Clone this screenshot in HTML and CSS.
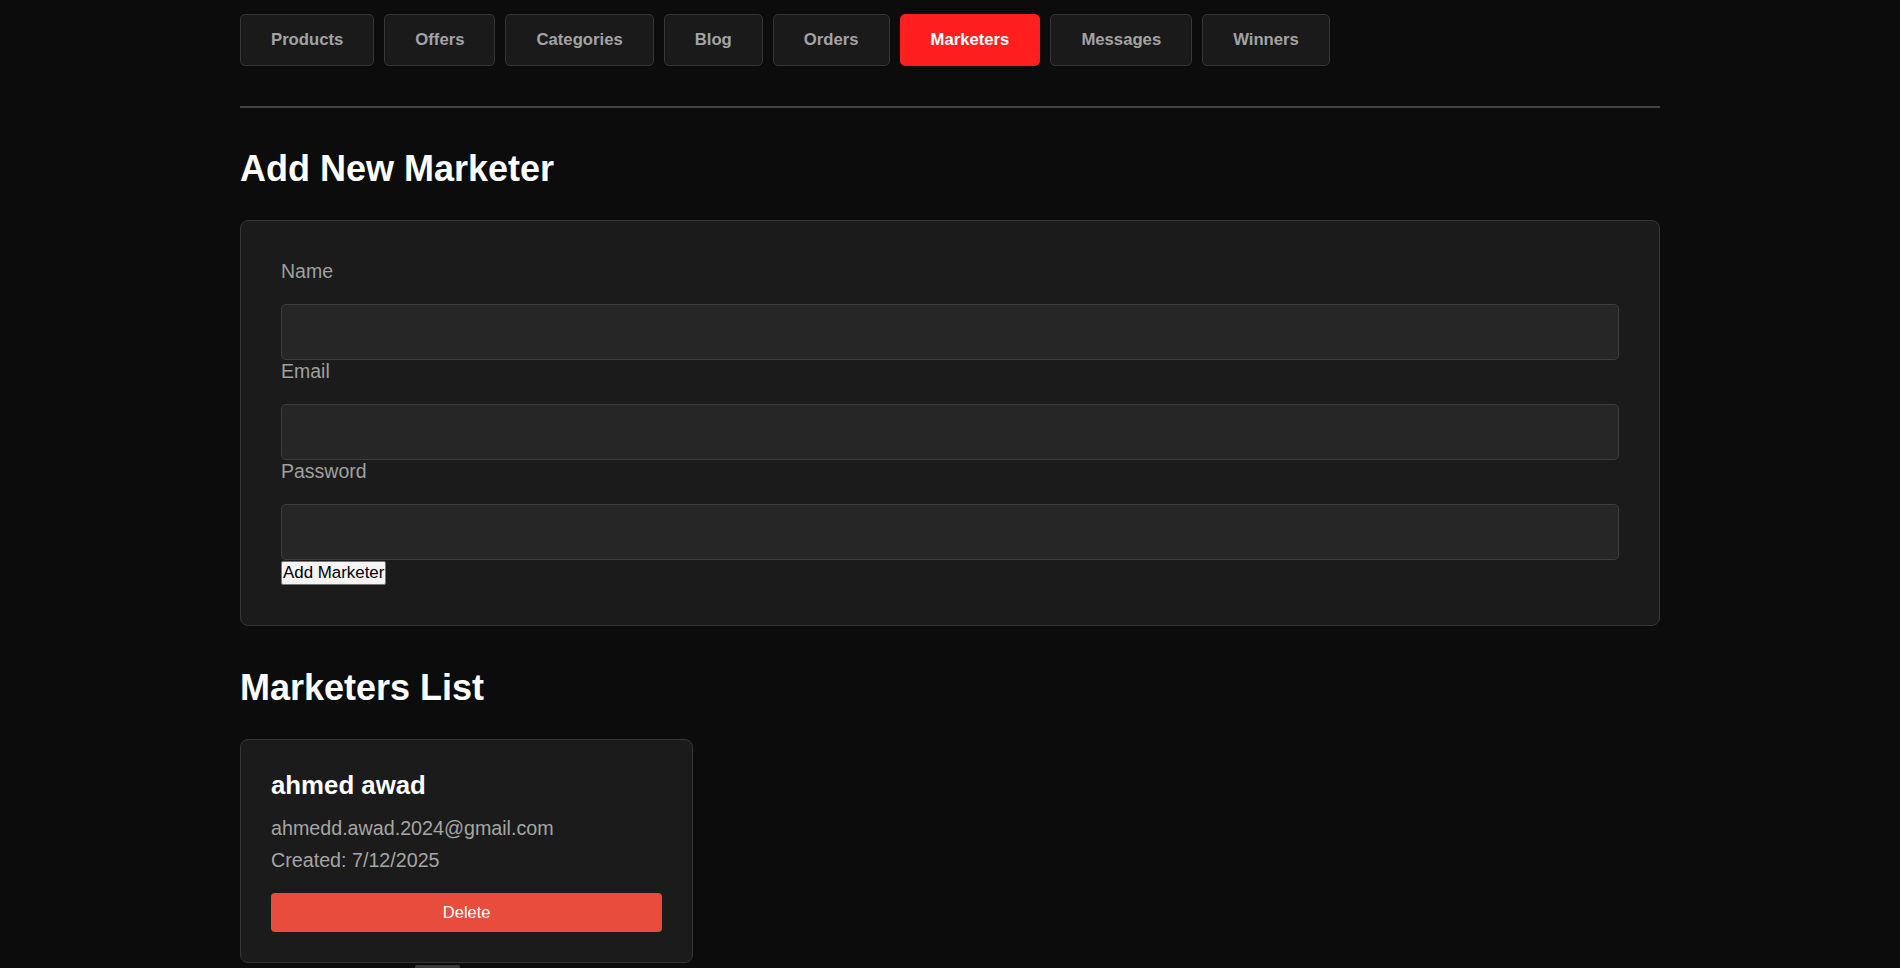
FILE: index.html
```html
<!DOCTYPE html>
<html lang="en">
<head>
<meta charset="utf-8">
<title>Marketers</title>
<link rel="stylesheet" href="styles.css">
</head>
<body>
<div class="container">
  <nav class="tabs">
    <button class="tab">Products</button>
    <button class="tab">Offers</button>
    <button class="tab">Categories</button>
    <button class="tab">Blog</button>
    <button class="tab">Orders</button>
    <button class="tab active">Marketers</button>
    <button class="tab">Messages</button>
    <button class="tab">Winners</button>
  </nav>
  <hr class="divider">

  <h1 class="section-title">Add New Marketer</h1>
  <form class="form-card">
    <label class="field-label" for="name">Name</label>
    <input class="field-input" id="name" type="text">
    <label class="field-label" for="email">Email</label>
    <input class="field-input" id="email" type="email">
    <label class="field-label" for="password">Password</label>
    <input class="field-input" id="password" type="password">
    <button class="submit-btn" type="button">Add Marketer</button>
  </form>

  <h2 class="section-title list-title">Marketers List</h2>
  <div class="marketer-grid">
    <div class="marketer-card">
      <h3 class="marketer-name">ahmed awad</h3>
      <p class="marketer-email">ahmedd.awad.2024@gmail.com</p>
      <p class="marketer-date">Created: 7/12/2025</p>
      <button class="delete-btn" type="button">Delete</button>
    </div>
  </div>
  <div class="list-footer"><span class="footer-chip"></span></div>
</div>
</body>
</html>
```

FILE: styles.css
```css
* {
  box-sizing: border-box;
}

html, body {
  margin: 0;
  padding: 0;
  background: #0c0c0c;
  font-family: "Liberation Sans", Arial, sans-serif;
  color: #ffffff;
}

body {
  overflow: hidden;
}

.container {
  width: 1420px;
  margin: 0 auto;
  padding-top: 14px;
}

.tabs {
  display: flex;
  gap: 10px;
}

.tab {
  font-family: "Liberation Sans", Arial, sans-serif;
  font-size: 16.7px;
  font-weight: bold;
  line-height: 20px;
  padding: 15px 30px;
  background: #1a1a1a;
  color: #a3a3a3;
  border: 1px solid #363636;
  border-radius: 5px;
  cursor: pointer;
}

.tab.active {
  background: #ff1f1f;
  border-color: #ff1f1f;
  color: #ffffff;
}

.divider {
  border: none;
  height: 2px;
  background: #444444;
  margin: 40px 0 40px;
}

.section-title {
  font-size: 36px;
  font-weight: bold;
  line-height: 42px;
  margin: 0 0 30px;
  color: #ffffff;
}

.list-title {
  margin-top: 41px;
}

.form-card {
  background: #1b1b1b;
  border: 1px solid #363636;
  border-radius: 8px;
  padding: 39px 40px 40px;
  display: flex;
  flex-direction: column;
  align-items: flex-start;
}

.field-label {
  display: block;
  font-size: 19.5px;
  line-height: 22px;
  color: #a0a0a0;
  margin-bottom: 22px;
}

.field-input {
  display: block;
  width: 100%;
  height: 56px;
  background: #262626;
  border: 1px solid #3e3e3e;
  border-radius: 5px;
  color: #ffffff;
  font-size: 16px;
  padding: 0 12px;
  outline: none;
}

.submit-btn {
  font-family: "Liberation Sans", Arial, sans-serif;
  font-size: 16.9px;
  line-height: 20px;
  padding: 1px 1px;
  margin-top: 1px;
  background: #f4f4f4;
  color: #000000;
  border: 1px solid #767676;
  border-radius: 2px;
}

.marketer-grid {
  display: grid;
  grid-template-columns: repeat(3, 1fr);
  gap: 30px;
}

.marketer-card {
  background: #1b1b1b;
  border: 1px solid #363636;
  border-radius: 8px;
  padding: 30px 30px 30px;
}

.marketer-name {
  margin: 0 0 17px;
  font-size: 25.8px;
  line-height: 30px;
  font-weight: bold;
  color: #ffffff;
}

.marketer-email,
.marketer-date {
  margin: 0;
  font-size: 19.7px;
  line-height: 23px;
  color: #a6a6a6;
}

.marketer-email {
  margin-bottom: 9px;
}

.marketer-date {
  margin-bottom: 21px;
}

.delete-btn {
  display: block;
  width: 100%;
  height: 39px;
  background: #e74c3c;
  color: #ffffff;
  border: none;
  border-radius: 4px;
  font-family: "Liberation Sans", Arial, sans-serif;
  font-size: 16.5px;
}

.list-footer {
  padding: 2px 0 0 175px;
}

.footer-chip {
  display: block;
  width: 45px;
  height: 10px;
  background: #3a3a3a;
  border-radius: 2px;
}
```
